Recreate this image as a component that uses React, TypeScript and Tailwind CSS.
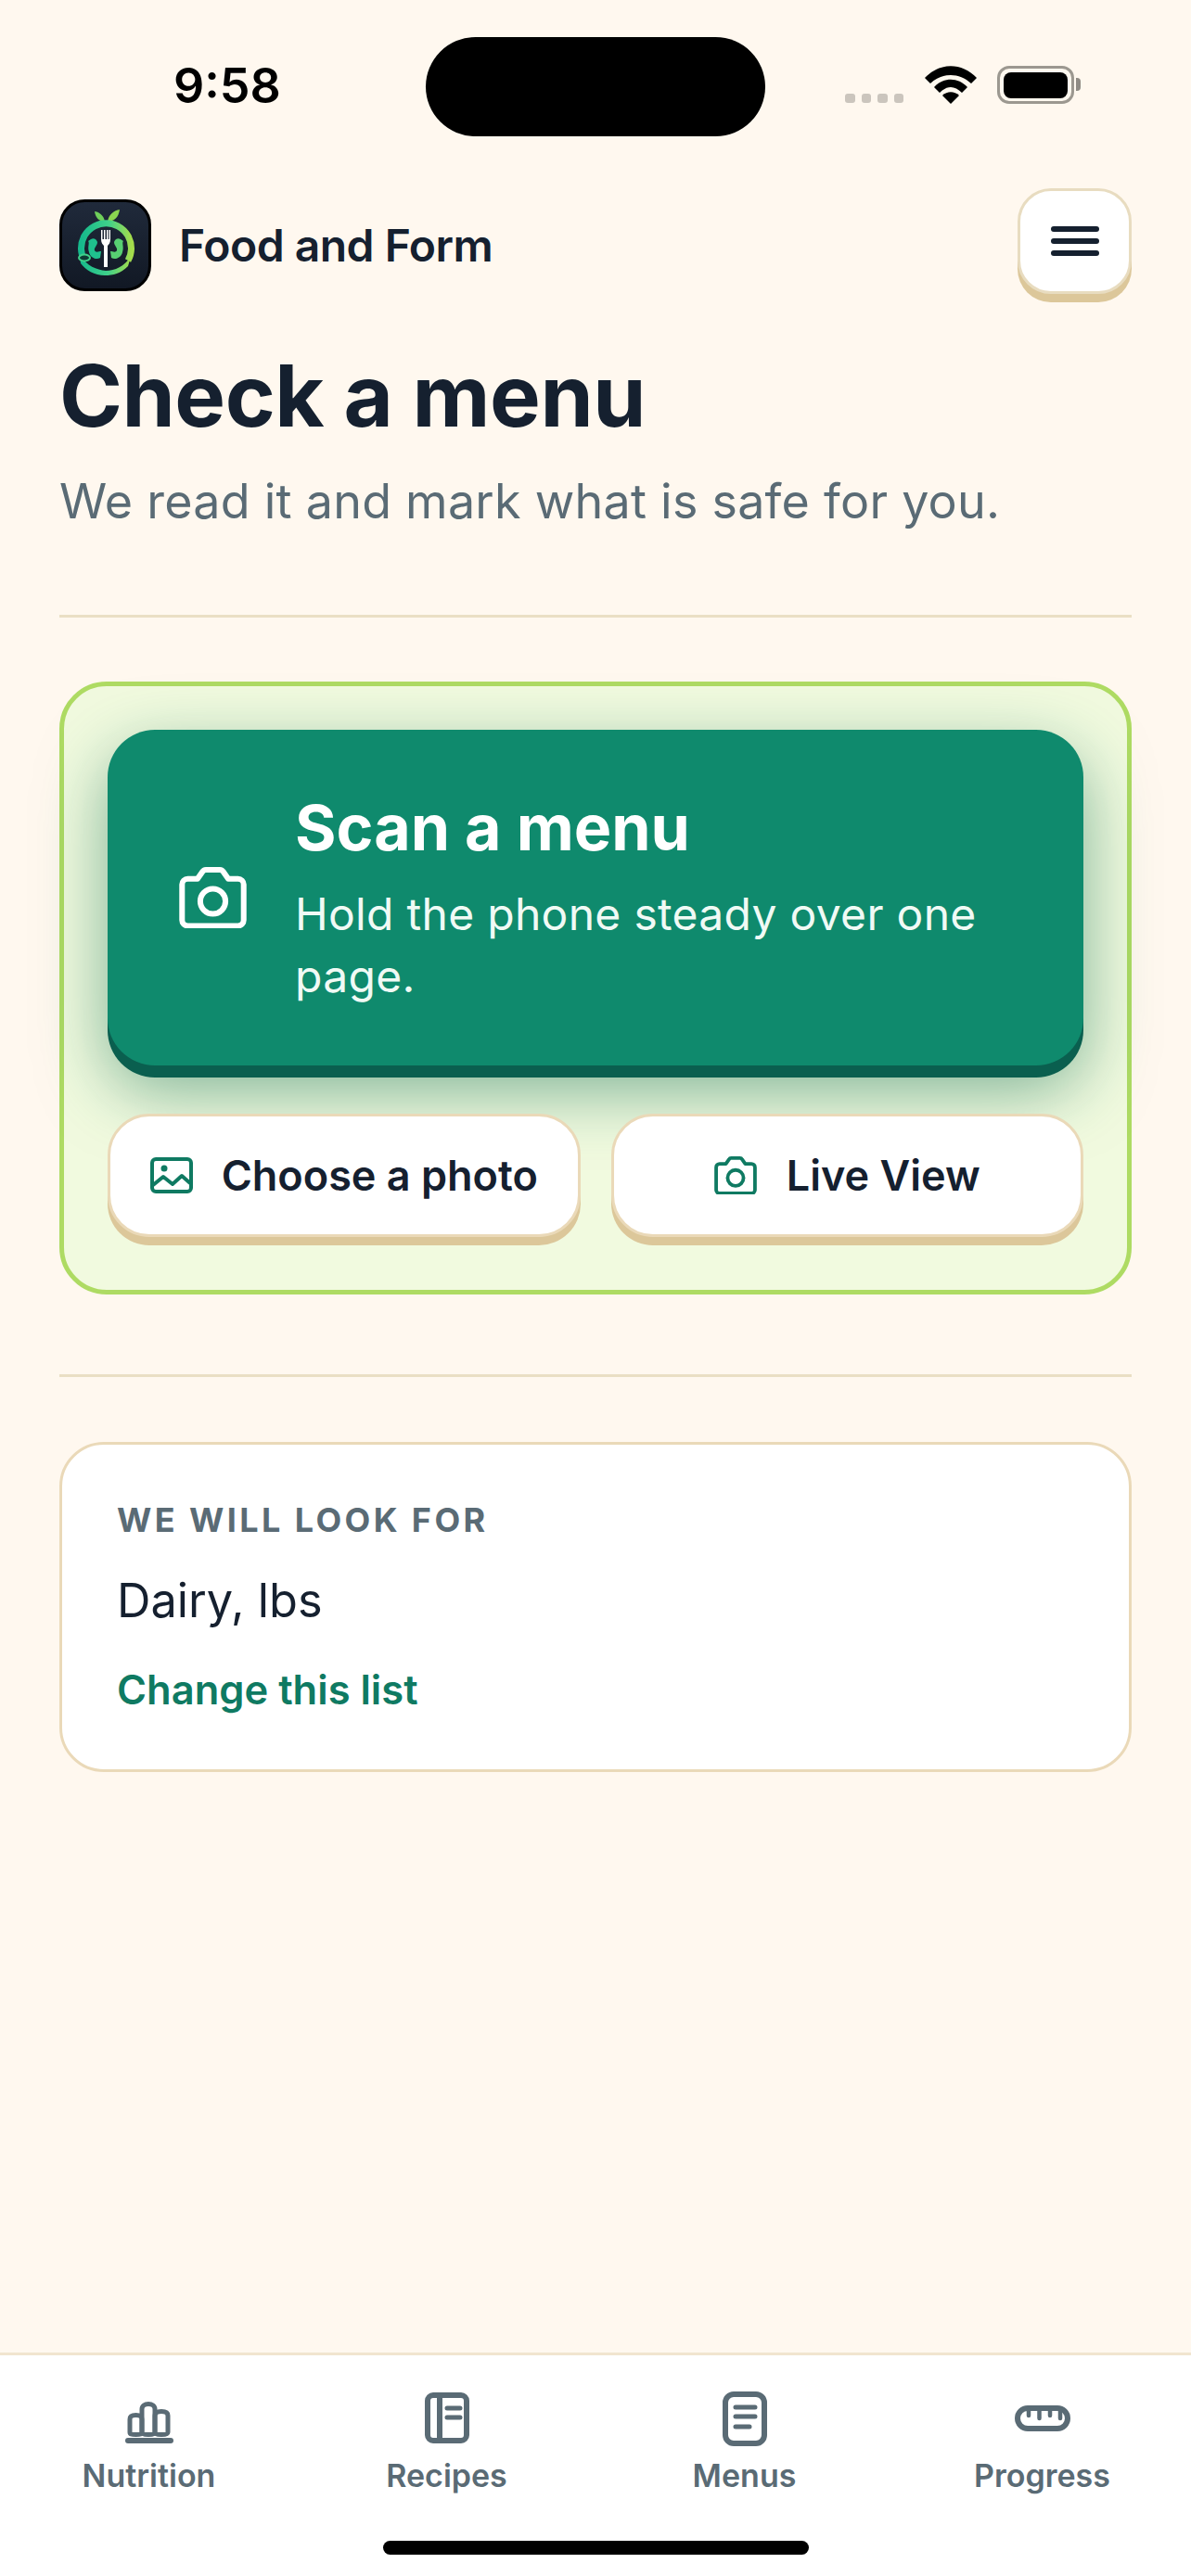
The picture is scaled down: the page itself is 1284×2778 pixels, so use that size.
import type { ReactNode } from "react";

const body = "font-['Inter','Noto_Sans',sans-serif]";

function LogoMark() {
    return (
        <svg width="99" height="99" viewBox="0 0 99 99" className="block">
            <defs>
                <linearGradient id="ring" x1="0" y1="0" x2="1" y2="0">
                    <stop offset="0" stopColor="#16b98c" />
                    <stop offset="0.55" stopColor="#3fd08a" />
                    <stop offset="1" stopColor="#a4dc4c" />
                </linearGradient>
                <linearGradient id="tile" x1="0" y1="0" x2="0" y2="1">
                    <stop offset="0" stopColor="#202a3b" />
                    <stop offset="1" stopColor="#111824" />
                </linearGradient>
            </defs>
            <rect x="1.5" y="1.5" width="96" height="96" rx="26" fill="url(#tile)" stroke="#000" strokeWidth="3" />
            <path d="M49 24C48 17 42 13 38 13C39 20 43 24 49 24Z" fill="#6fcf5a" />
            <path d="M52 24C53 16 59 12 65 11C64 19 59 24 52 24Z" fill="#8bd650" />
            <path d="M27 66A27 27 0 1 1 74 66" fill="none" stroke="url(#ring)" strokeWidth="7" />
            <path d="M22 60C30 72 40 76 50 77C60 77 70 72 77 62L74 72C66 80 58 82 49 82C38 82 28 76 23 69Z" fill="url(#ring)" />
            <ellipse cx="27" cy="63" rx="6" ry="3.5" fill="#0d3b34" stroke="#3fd08a" strokeWidth="2" />
            <path d="M34 43C37 41 40 43 41 46C41 50 37 52 38 55C39 58 43 56 45 56L44 63C39 66 33 62 32 57C30 51 33 47 31 45Z" fill="#1fc08d" />
            <path d="M66 43C63 41 60 43 59 46C59 50 63 52 62 55C61 58 57 56 55 56L56 63C61 66 67 62 68 57C70 51 67 47 69 45Z" fill="#57cf72" />
            <path d="M45 33V43C45 47 47 49 48 50L48 73H52L52 50C53 49 55 47 55 43V33H53.6V43H52.5V33H51V43H49.5V33H48V43H46.5V33Z" fill="#fff" />
        </svg>
    );
}

function CameraGlyph({ size, stroke }: { size: number; stroke: number }) {
    return (
        <svg width={size} height={size * 0.91} viewBox="0 0 48 44" fill="none" stroke="currentColor" strokeWidth={stroke} strokeLinejoin="round" className="block shrink-0">
            <path d="M6 8.5H13L16.5 3.5C17 2.6 18 2 19 2H29C30 2 31 2.6 31.500 3.5L35 8.500H42C44.200 8.500 46 10.300 46 12.500V38C46 40.200 44.200 42 42 42H6C3.800 42 2 40.200 2 38V12.500C2 10.300 3.800 8.500 6 8.500Z" />
            <circle cx="24" cy="24.500" r="9" />
        </svg>
    );
}

function PhotoGlyph() {
    return (
        <svg width="46" height="39" viewBox="0 0 46 39" fill="none" stroke="currentColor" strokeWidth="4" strokeLinejoin="round" className="block shrink-0">
            <rect x="2" y="2" width="42" height="35" rx="4" />
            <circle cx="15" cy="12" r="3.500" fill="currentColor" stroke="none" />
            <path d="M3 30L14 21L24 29L34 20L43 28" />
        </svg>
    );
}

// Tab bar glyphs share one 64x60 box so their labels line up
function NutritionGlyph() {
    return (
        <svg width="64" height="60" viewBox="0 0 64 60" fill="none" stroke="currentColor" strokeWidth="5" strokeLinecap="round" strokeLinejoin="round">
            <path d="M11 45V31C11 28 12.500 26.500 17.500 26.500C22.500 26.500 24 28 24 31V45C24 47 22.500 47.500 17.500 47.500C12.500 47.500 11 47 11 45Z" />
            <path d="M24 45V20C24 16.500 27 14.500 31 14.500C35 14.500 38 16.500 38 20V45C38 47 36 47.500 31 47.500C26 47.500 24 47 24 45Z" />
            <path d="M38 45V27C38 24 40 22.500 45 22.500C50 22.500 52 24 52 27V45C52 47 50 47.500 45 47.500C40 47.500 38 47 38 45Z" />
            <path d="M9 54H55" strokeWidth="6" />
        </svg>
    );
}

function RecipesGlyph() {
    return (
        <svg width="64" height="60" viewBox="0 0 64 60" fill="none" stroke="currentColor" strokeWidth="6" strokeLinecap="round" strokeLinejoin="round">
            <rect x="11" y="5" width="42" height="49" rx="6" />
            <path d="M24 5V54" strokeLinecap="butt" />
            <path d="M32 19H46M32 29H46" strokeWidth="5" />
        </svg>
    );
}

function MenusGlyph() {
    return (
        <svg width="64" height="60" viewBox="0 0 64 60" fill="none" stroke="currentColor" strokeWidth="6" strokeLinecap="round" strokeLinejoin="round">
            <rect x="11" y="4" width="42" height="53" rx="9" />
            <path d="M22 18H43M22 28H43M22 39H37" strokeWidth="5" />
        </svg>
    );
}

function ProgressGlyph() {
    return (
        <svg width="64" height="60" viewBox="0 0 64 60" fill="none" stroke="currentColor" strokeWidth="6" strokeLinecap="round" strokeLinejoin="round">
            <rect x="5" y="19" width="54" height="22" rx="11" />
            <path d="M17 21V27M28.500 21V30M40 21V27M51 21V30" strokeWidth="4.500" />
        </svg>
    );
}

function TabItem({ icon, label }: { icon: ReactNode; label: string }) {
    return (
        <div className="flex flex-1 flex-col items-center text-[#5a6b75]">
            {icon}
            <span className={`${body} mt-[12px] text-[34px] leading-[40px] font-semibold`}>{label}</span>
        </div>
    );
}

function ActionButton({ icon, label, gap }: { icon: ReactNode; label: string; gap: string }) {
    return (
        <button className={`flex h-[133px] flex-1 items-center justify-center ${gap} rounded-[45px] border-[3px] border-[#ead9b8] bg-white shadow-[0_9px_0_#dcc79a]`}>
            <span className="text-[#0f7a62]">{icon}</span>
            <span className={`${body} text-[45px] font-semibold text-[#15202f]`}>{label}</span>
        </button>
    );
}

export default function App() {
    return (
        <div className="flex h-[2778px] w-[1284px] flex-col overflow-hidden bg-[#fff8ef]">
            {/* status bar */}
            <div className="relative h-[203px] shrink-0">
                <span className={`${body} absolute left-[187px] top-[61px] text-[52px] leading-[64px] font-semibold text-black`}>9:58</span>
                <div className="absolute left-[459px] top-[40px] h-[107px] w-[366px] rounded-[54px] bg-black" />
                <div className="absolute left-[911px] top-[101px] flex gap-[7px]">
                    <div className="h-[10px] w-[10.500px] rounded-[3px] bg-[#cbc5bd]" />
                    <div className="h-[10px] w-[10.500px] rounded-[3px] bg-[#cbc5bd]" />
                    <div className="h-[10px] w-[10.500px] rounded-[3px] bg-[#cbc5bd]" />
                    <div className="h-[10px] w-[10.500px] rounded-[3px] bg-[#cbc5bd]" />
                </div>
                <svg width="56" height="41" viewBox="0 0 56 41" className="absolute left-[997px] top-[71px]">
                    <path d="M0 13C16 -4 40 -4 56 13L50 19C37 7 19 7 6 19Z" fill="#000" />
                    <path d="M10 23C20 12 36 12 46 23L40 29C32 21 24 21 16 29Z" fill="#000" />
                    <path d="M19 32C24 27 32 27 37 32L28 41Z" fill="#000" />
                </svg>
                <div className="absolute left-[1075px] top-[71px] flex h-[41px] w-[83px] items-center justify-center rounded-[13px] border-[3px] border-[#9c9890]">
                    <div className="h-[28px] w-[69px] rounded-[8px] bg-black" />
                </div>
                <div className="absolute left-[1160px] top-[84px] h-[14px] w-[5px] rounded-r-[4px] bg-[#8f8b84]" />
            </div>

            <div className="flex flex-1 flex-col px-[64px]">
                {/* app header */}
                <div className="flex items-start justify-between">
                    <div className="mt-[12px] flex items-center gap-[30px]">
                        <LogoMark />
                        <span className={`${body} text-[48px] leading-[60px] font-semibold tracking-[-0.5px] text-[#15202f]`}>Food and Form</span>
                    </div>
                    <button className="flex h-[114px] w-[123px] flex-col items-center justify-center gap-[7px] rounded-[36px] border-[3px] border-[#e8dcc0] bg-white shadow-[0_9px_0_#dcc79a]">
                        <div className="h-[6px] w-[52px] rounded-full bg-[#15202f]" />
                        <div className="h-[6px] w-[52px] rounded-full bg-[#15202f]" />
                        <div className="h-[6px] w-[52px] rounded-full bg-[#15202f]" />
                    </button>
                </div>

                <h1 className={`${body} mt-[60px] text-[92px] leading-[100px] font-bold tracking-[-0.5px] text-[#15202f]`}>Check a menu</h1>
                <p className={`${body} mt-[26px] text-[52px] leading-[76px] tracking-[0.25px] text-[#5a6b75]`}>We read it and mark what is safe for you.</p>

                <div className="mt-[84px] h-[3px] bg-[#eadfc4]" />

                {/* scan panel */}
                <div className="mt-[69px] flex flex-col rounded-[51px] border-[5px] border-[#aedb63] bg-[#f1fadf] px-[47px] pt-[47px] pb-[57px]">
                    <div className="flex h-[362px] items-center gap-[52px] rounded-[51px] bg-[#0f8a6d] pl-[77px] pr-[60px] text-white shadow-[0_13px_0_#0a5f4f,0_26px_72px_rgba(15,110,80,0.52)]">
                        <CameraGlyph size={73} stroke={4} />
                        <div className="flex-1">
                            <h2 className={`${body} text-[68px] leading-[84px] font-bold`}>Scan a menu</h2>
                            <p className={`${body} mt-[18px] text-[48px] leading-[67px] tracking-[0.3px] text-[#f0faf5]`}>Hold the phone steady over one page.</p>
                        </div>
                    </div>
                    <div className="mt-[52px] flex gap-[33px]">
                        <ActionButton icon={<PhotoGlyph />} label="Choose a photo" gap="gap-[31px]" />
                        <ActionButton icon={<CameraGlyph size={46} stroke={4} />} label="Live View" gap="gap-[32px]" />
                    </div>
                </div>

                <div className="mt-[86px] h-[3px] bg-[#eadfc4]" />

                {/* allergen summary */}
                <div className="mt-[70px] flex h-[356px] flex-col rounded-[48px] border-[3px] border-[#ead9b8] bg-white px-[59px] pt-[59px]">
                    <span className={`${body} text-[36px] leading-[44px] font-bold tracking-[3.4px] text-[#5a6b75]`}>WE WILL LOOK FOR</span>
                    <span className={`${body} mt-[33px] text-[50.500px] leading-[64px] text-[#15202f]`}>Dairy, lbs</span>
                    <span className={`${body} mt-[36px] text-[43.500px] leading-[56px] font-semibold text-[#0f7a62]`}>Change this list</span>
                </div>
            </div>

            {/* tab bar */}
            <div className="relative h-[241px] shrink-0 border-t-[3px] border-[#f1e5cf] bg-white pt-[38px]">
                <div className="flex">
                    <TabItem icon={<NutritionGlyph />} label="Nutrition" />
                    <TabItem icon={<RecipesGlyph />} label="Recipes" />
                    <TabItem icon={<MenusGlyph />} label="Menus" />
                    <TabItem icon={<ProgressGlyph />} label="Progress" />
                </div>
                <div className="absolute bottom-[23px] left-[413px] h-[15px] w-[459px] rounded-full bg-black" />
            </div>
        </div>
    );
}
